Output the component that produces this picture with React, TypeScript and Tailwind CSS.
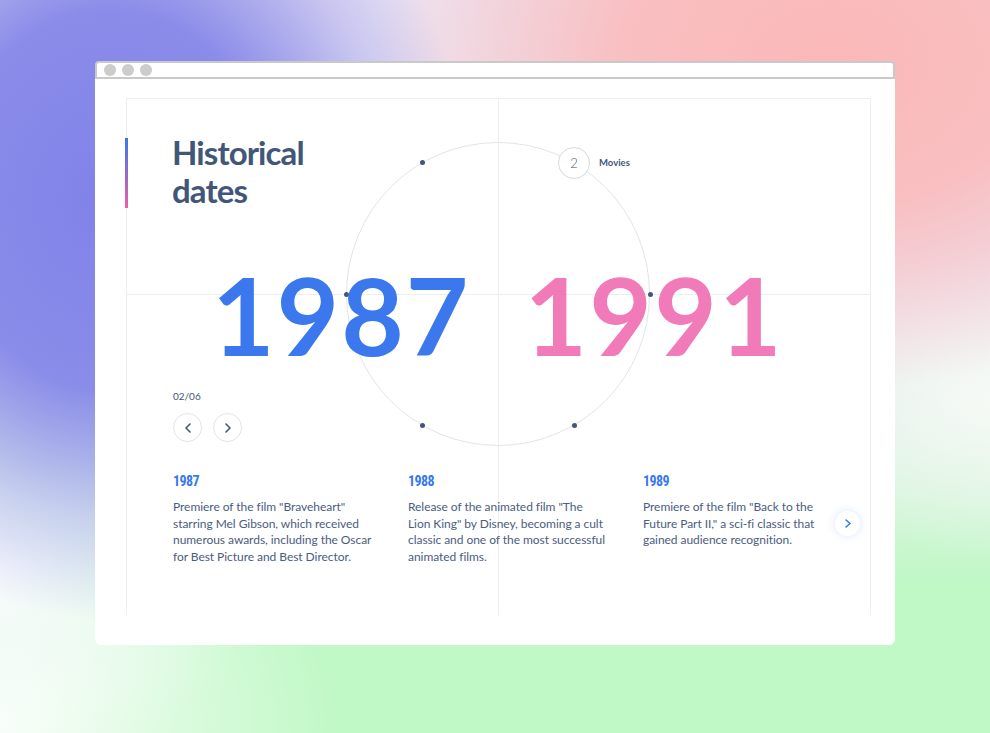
import React from "react";

const dark = "#42567a";

function Chevron({ dir, color, w = 6, h = 10, sw = 1.6 }: { dir: "l" | "r"; color: string; w?: number; h?: number; sw?: number }) {
  const d = dir === "l" ? `M${w - 1} 1 L1 ${h / 2} L${w - 1} ${h - 1}` : `M1 1 L${w - 1} ${h / 2} L1 ${h - 1}`;
  return (
    <svg width={w} height={h} viewBox={`0 0 ${w} ${h}`} fill="none">
      <path d={d} stroke={color} strokeWidth={sw} strokeLinecap="round" strokeLinejoin="round" />
    </svg>
  );
}

const slides = [
  {
    year: "1987",
    text: 'Premiere of the film "Braveheart" starring Mel Gibson, which received numerous awards, including the Oscar for Best Picture and Best Director.',
  },
  {
    year: "1988",
    text: 'Release of the animated film "The Lion King" by Disney, becoming a cult classic and one of the most successful animated films.',
  },
  {
    year: "1989",
    text: 'Premiere of the film "Back to the Future Part II," a sci-fi classic that gained audience recognition.',
  },
];

export default function App() {
  const R = 152;
  const dots = [120, 180, 0, -60, -120];
  return (
    <div
      className="w-[990px] h-[733px] overflow-hidden pt-[61px] pl-[95px] bg-[radial-gradient(ellipse_360px_420px_at_110px_200px,rgba(128,130,232,1)_0%,rgba(128,130,232,0.9)_45%,rgba(128,130,232,0.35)_75%,rgba(128,130,232,0)_100%),radial-gradient(ellipse_460px_330px_at_830px_60px,rgba(251,184,184,1)_0%,rgba(251,184,184,0.85)_45%,rgba(251,184,184,0)_100%),radial-gradient(ellipse_260px_200px_at_0px_570px,rgba(250,250,255,0.95)_0%,rgba(250,250,255,0)_100%),radial-gradient(ellipse_340px_260px_at_0px_720px,#f8fff8_0%,rgba(248,255,248,0)_100%),radial-gradient(ellipse_220px_160px_at_990px_400px,#f6faf5_0%,rgba(246,250,245,0)_100%),linear-gradient(180deg,#ece6f4_0%,#eae8f6_45%,#d6f4dc_66%,#c0f8c6_80%)]"
      style={{ fontFamily: "Lato, 'Noto Sans', sans-serif" }}
    >
      <div className="w-[800px] flex flex-col">
        {/* title bar */}
        <div className="h-[18px] bg-white border-2 border-[#c9c9c9] rounded-t-[4px] flex items-center gap-[6px] pl-[7px]">
          <div className="w-[12px] h-[12px] rounded-full bg-[#cccccc]" />
          <div className="w-[12px] h-[12px] rounded-full bg-[#cccccc]" />
          <div className="w-[12px] h-[12px] rounded-full bg-[#cccccc]" />
        </div>
        {/* body */}
        <div className="h-[566px] bg-white rounded-b-[6px] pt-[19px] pl-[31px]">
          <div className="relative w-[745px] h-[517px] border-l border-r border-t border-[#eceef2]">
            {/* crosshair */}
            <div className="absolute left-[371px] top-0 bottom-0 w-px bg-[#eceef2]" />
            <div className="absolute left-0 right-0 top-[195px] h-px bg-[#eceef2]" />
            {/* circle */}
            <div className="absolute left-[219px] top-[43px] w-[304px] h-[304px] rounded-full border border-[#e1e4ea]">
              {dots.map((a) => {
                const x = R + R * Math.cos((a * Math.PI) / 180);
                const y = R - R * Math.sin((a * Math.PI) / 180);
                return (
                  <div
                    key={a}
                    className="absolute w-[5px] h-[5px] rounded-full bg-[#42567a]"
                    style={{ left: x - 3.5, top: y - 3.5 }}
                  />
                );
              })}
              <div
                className="absolute flex items-center"
                style={{ left: R + R * Math.cos(Math.PI / 3) - 17, top: R - R * Math.sin(Math.PI / 3) - 16 }}
              >
                <div className="w-[32px] h-[32px] rounded-full bg-white border border-[#d5d9e1] flex items-center justify-center text-[13px] font-light text-[#42567a]">
                  2
                </div>
                <span className="ml-[9px] text-[9.5px] font-bold text-[#42567a]">Movies</span>
              </div>
            </div>
            {/* gradient bar */}
            <div className="absolute left-[-2px] top-[39px] w-[3px] h-[70px] bg-[linear-gradient(180deg,#3877ee_0%,#ef5da8_100%)]" />

            <div className="relative pl-[45px] pt-[34px]">
              <h1 className="text-[33px] leading-[38px] font-bold tracking-[-0.9px] text-[#42567a]">
                Historical
                <br />
                dates
              </h1>
            </div>

            <div className="relative grid grid-cols-2 mt-[51px]">
              <div className="text-right pr-[28px] text-[108px] leading-[108px] font-bold tracking-[2px] text-[#3b78ee]">1987</div>
              <div className="pl-[26px] text-[108px] leading-[108px] font-bold tracking-[2.2px] text-[#f07bb8]">1991</div>
            </div>

            <div className="relative pl-[46px] mt-[22px]">
              <div className="text-[10px] leading-[12px] text-[#42567a]">02/06</div>
              <div className="flex gap-[11px] mt-[11px]">
                <div className="w-[29px] h-[29px] rounded-full border border-[#dfe3ea] flex items-center justify-center">
                  <Chevron dir="l" color={dark} />
                </div>
                <div className="w-[29px] h-[29px] rounded-full border border-[#dfe3ea] flex items-center justify-center">
                  <Chevron dir="r" color={dark} />
                </div>
              </div>
            </div>

            <div className="relative flex pl-[46px] mt-[30px]">
              {slides.map((s) => (
                <div key={s.year} className="w-[200px] shrink-0 mr-[35px]">
                  <div
                    className="text-[14px] leading-[18px] font-bold tracking-[-0.6px] text-[#3877ee]"
                    style={{ fontFamily: "'Liberation Sans Narrow', 'Roboto Condensed', 'Liberation Sans', sans-serif" }}
                  >
                    {s.year}
                  </div>
                  <p className="mt-[9px] text-[12px] leading-[16.7px] tracking-[-0.05px] text-[#4a5d80]">{s.text}</p>
                </div>
              ))}
              <div className="absolute left-[708px] top-[39px] w-[25px] h-[25px] rounded-full bg-white shadow-[0_0_10px_rgba(56,119,238,0.18)] flex items-center justify-center">
                <Chevron dir="r" color="#3877ee" w={6} h={9} sw={1.6} />
              </div>
            </div>
          </div>
        </div>
      </div>
    </div>
  );
}
